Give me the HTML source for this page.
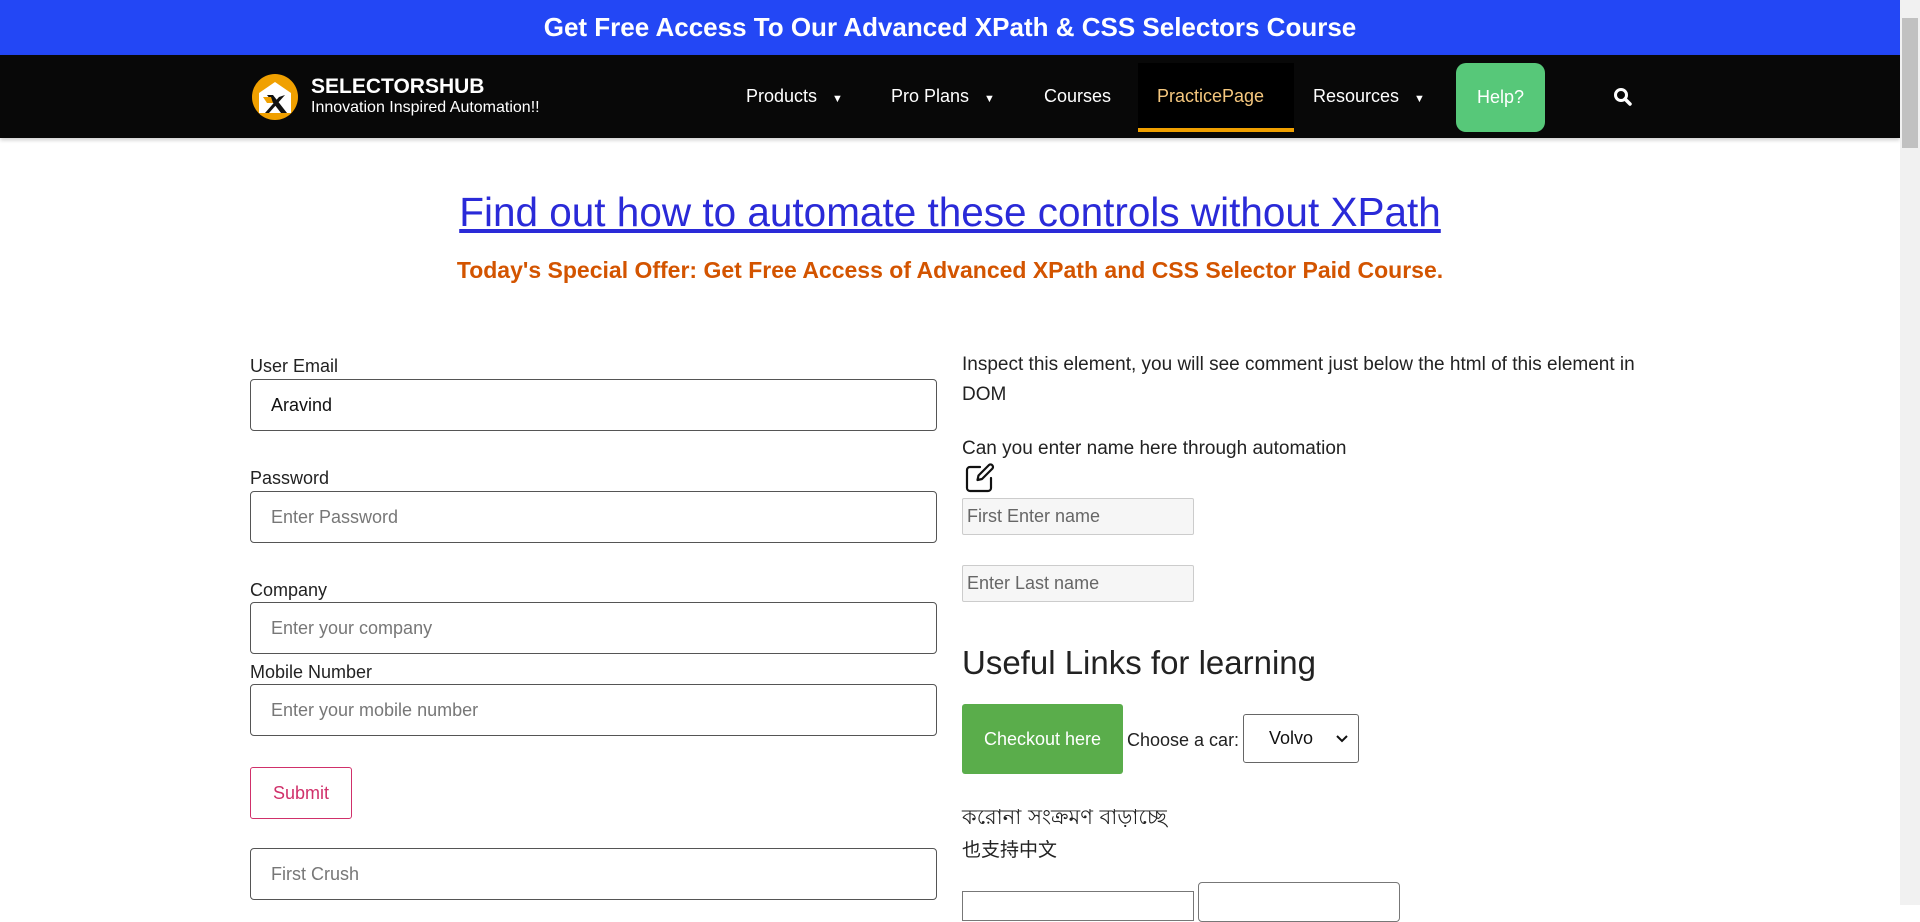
<!DOCTYPE html>
<html><head><meta charset="utf-8"><style>
*{box-sizing:border-box;margin:0;padding:0}
body{width:1920px;height:905px;overflow:hidden;background:#fff;font-family:"Liberation Sans","Noto Sans CJK SC",sans-serif;color:#222;position:relative}
.a{position:absolute;white-space:nowrap}
.top{left:0;top:0;width:1900px;height:55px;background:#2347f5;color:#fff;font-weight:bold;font-size:26px;text-align:center;line-height:55px}
.nav{left:0;top:55px;width:1900px;height:83px;background:#080808;box-shadow:0 2px 4px rgba(0,0,0,.2)}
.ni{color:#fff;font-size:18px;top:86px}
.lbl{font-size:18px;color:#222}
.in{border:1px solid #555;border-radius:4px;height:52px;width:687px;left:250px;font-size:18px;padding-left:20px;line-height:50px;color:#777}
.in2{border:1px solid #ccc;background:#f6f6f6;border-radius:2px;width:232px;height:37px;left:962px;font-size:18px;padding-left:4px;line-height:35px;color:#666}
.sb{left:1900px;top:0;width:20px;height:905px;background:#f1f1f1}
</style></head><body>
<div class="a top">Get Free Access To Our Advanced XPath &amp; CSS Selectors Course</div>
<div class="a nav"></div>
<svg class="a" style="left:251px;top:73px" width="48" height="48" viewBox="0 0 48 48"><circle cx="24" cy="24" r="23" fill="#f0a000"/><path d="M8 20 L24 9 L40 20 L40 40 L8 40Z" fill="#fff"/><path d="M16 22 L30 40 L36 40 L22 22Z" fill="#111"/><path d="M34 22 L18 40 L14 40 L28 24Z" fill="#111"/><path d="M12 24 L20 24 L22 30 L16 30Z" fill="#f0a000"/></svg>
<div class="a" style="left:311px;top:75px;color:#fff;font-weight:bold;font-size:21px">SELECTORSHUB</div>
<div class="a" style="left:311px;top:99px;color:#fff;font-size:16px">Innovation Inspired Automation!!</div>
<div class="a ni" style="left:746px">Products &nbsp;&nbsp;<span style="font-size:11px">▼</span></div>
<div class="a ni" style="left:891px">Pro Plans &nbsp;&nbsp;<span style="font-size:11px">▼</span></div>
<div class="a ni" style="left:1044px">Courses</div>
<div class="a" style="left:1138px;top:63px;width:156px;height:69px;background:#000;border-bottom:4px solid #f0a000"></div>
<div class="a ni" style="left:1157px;color:#f5c77e">PracticePage</div>
<div class="a ni" style="left:1313px">Resources &nbsp;&nbsp;<span style="font-size:11px">▼</span></div>
<div class="a" style="left:1456px;top:63px;width:89px;height:69px;background:#57c879;border-radius:10px;color:#fff;font-size:18px;text-align:center;line-height:69px">Help?</div>
<svg class="a" style="left:1613px;top:87px" width="20" height="20" viewBox="0 0 20 20"><circle cx="8" cy="8" r="5.5" fill="none" stroke="#fff" stroke-width="3"/><path d="M12 12 L17 17" stroke="#fff" stroke-width="3.5" stroke-linecap="round"/></svg>
<div class="a" style="left:0;width:1900px;top:189px;text-align:center;font-size:40.5px;color:#2a2ad8;text-decoration:underline">Find out how to automate these controls without XPath</div>
<div class="a" style="left:0;width:1900px;top:257px;text-align:center;font-size:23px;font-weight:bold;color:#d35400">Today's Special Offer: Get Free Access of Advanced XPath and CSS Selector Paid Course.</div>
<div class="a lbl" style="left:250px;top:356px">User Email</div>
<div class="a in" style="top:379px;color:#111">Aravind</div>
<div class="a lbl" style="left:250px;top:468px">Password</div>
<div class="a in" style="top:491px">Enter Password</div>
<div class="a lbl" style="left:250px;top:580px">Company</div>
<div class="a in" style="top:602px">Enter your company</div>
<div class="a lbl" style="left:250px;top:662px">Mobile Number</div>
<div class="a in" style="top:684px">Enter your mobile number</div>
<div class="a" style="left:250px;top:767px;width:102px;height:52px;border:1px solid #d0306a;border-radius:3px;color:#d0306a;font-size:18px;text-align:center;line-height:50px">Submit</div>
<div class="a in" style="top:848px">First Crush</div>
<div class="a lbl" style="left:962px;top:354px;font-size:19px">Inspect this element, you will see comment just below the html of this element in</div>
<div class="a lbl" style="left:962px;top:384px;font-size:19px">DOM</div>
<div class="a lbl" style="left:962px;top:438px;font-size:19px">Can you enter name here through automation</div>
<svg class="a" style="left:964px;top:462px" width="32" height="32" viewBox="0 0 32 32" fill="none" stroke="#111" stroke-width="2.2" stroke-linecap="round" stroke-linejoin="round"><path d="M16 5H6a3 3 0 0 0-3 3v18a3 3 0 0 0 3 3h18a3 3 0 0 0 3-3V16"/><path d="M25 3a2.5 2.5 0 0 1 3.5 3.5L18 17l-4.5 1 1-4.5Z"/></svg>
<div class="a in2" style="top:498px">First Enter name</div>
<div class="a in2" style="top:565px">Enter Last name</div>
<div class="a" style="left:962px;top:644px;font-size:33px;color:#222">Useful Links for learning</div>
<div class="a" style="left:962px;top:704px;width:161px;height:70px;background:#5aad4b;border-radius:3px;color:#fff;font-size:18px;text-align:center;line-height:70px">Checkout here</div>
<div class="a lbl" style="left:1127px;top:730px;font-size:18px">Choose a car:</div>
<div class="a" style="left:1243px;top:714px;width:116px;height:49px;border:1px solid #666;border-radius:3px;font-size:18px;line-height:47px;padding-left:25px;color:#111">Volvo<svg style="position:absolute;right:10px;top:20px" width="12" height="8" viewBox="0 0 12 8"><path d="M1 1l5 5 5-5" fill="none" stroke="#111" stroke-width="2"/></svg></div>
<div class="a" style="left:962px;top:801px;font-size:21px;font-family:'DejaVu Sans',sans-serif">করোনা সংক্রমণ বাড়াচ্ছে</div>
<div class="a" style="left:962px;top:835px;font-size:19px;font-family:'Noto Sans CJK SC',sans-serif">也支持中文</div>
<div class="a" style="left:962px;top:891px;width:232px;height:30px;border:1px solid #777"></div>
<div class="a" style="left:1198px;top:882px;width:202px;height:40px;border:1px solid #777;border-radius:4px"></div>
<div class="a sb"></div>
<div class="a" style="left:1902px;top:18px;width:16px;height:130px;background:#c1c1c1"></div>
</body></html>
